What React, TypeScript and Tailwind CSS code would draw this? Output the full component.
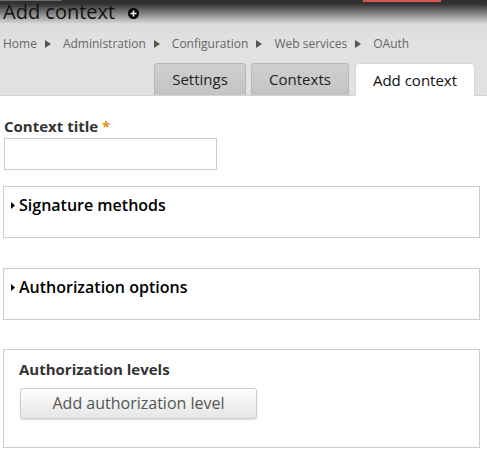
import React from "react";

const Arrow = () => (
  <svg width="6" height="8" viewBox="0 0 6 8" className="ml-[8px] mr-[12px] shrink-0">
    <path d="M0 0 L6 4 L0 8 Z" fill="#555" />
  </svg>
);

const Caret = () => (
  <svg width="4" height="7" viewBox="0 0 4 7" className="mr-[4px] shrink-0">
    <path d="M0 0 L4 3.5 L0 7 Z" fill="#000" />
  </svg>
);

export default function App() {
  const crumbs = ["Home", "Administration", "Configuration", "Web services", "OAuth"];
  return (
    <div className="w-[487px] h-[454px] bg-white overflow-hidden font-['Open_Sans',sans-serif]">
      <div className="relative h-[96px] bg-[linear-gradient(to_bottom,#2f2f2f_0px,#333_4px,#dcdcdc_24px,#e1e1e1_40px,#e1e1e1_100%)] border-b border-[#d4d4d4] flex flex-col">
        <div className="absolute left-0 top-0 w-[62px] h-[1px] bg-[#6a6a6a]" />
        <div className="absolute left-[363px] top-0 w-[78px] h-[2px] bg-[#d9534f]" />
        <div className="flex items-center h-[24px] pl-[3px]">
          <span className="text-[20px] leading-[24px] text-[#111]">Add context</span>
          <svg width="11" height="11" viewBox="0 0 11 11" className="ml-[13px] mt-[3px]">
            <circle cx="5.5" cy="5.5" r="5.5" fill="#000" />
            <path d="M5.5 2.5 V8.5 M2.5 5.5 H8.5" stroke="#fff" strokeWidth="1.6" />
          </svg>
        </div>
        <div className="flex items-center h-[16px] mt-[12px] pl-[3px] text-[12px] leading-[16px] text-[#666]">
          {crumbs.map((c, i) => (
            <React.Fragment key={c}>
              <span>{c}</span>
              {i < crumbs.length - 1 && <Arrow />}
            </React.Fragment>
          ))}
        </div>
        <div className="flex items-end pl-[154px] mt-auto">
          <div className="w-[92px] h-[32px] flex items-center justify-center rounded-t-[4px] border border-b-0 border-[#b5b5b5] bg-[linear-gradient(to_bottom,#cfcfcf,#c4c4c4)] text-[15px] text-[#222]">
            Settings
          </div>
          <div className="w-[98px] h-[32px] flex items-center justify-center rounded-t-[4px] border border-b-0 border-[#b5b5b5] bg-[linear-gradient(to_bottom,#cfcfcf,#c4c4c4)] text-[15px] text-[#222] ml-[5px]">
            Contexts
          </div>
          <div className="w-[120px] h-[33px] -mb-[1px] flex items-center justify-center rounded-t-[4px] border border-b-0 border-[#d6d6d6] bg-white text-[15px] text-[#111] ml-[6px]">
            Add context
          </div>
        </div>
      </div>

      <div className="pl-[3px] pr-[7px]">
        <div className="mt-[20px] pl-[1px] text-[15px] leading-[20px] font-bold text-[#333]">
          Context title <span className="text-[#e09010]">*</span>
        </div>
        <div className="mt-[2px] ml-[1px] w-[213px] h-[32px] border border-[#ccc] bg-white" />

        <div className="mt-[16px] h-[52px] border border-[#ccc] pt-[8px] pl-[7px]">
          <div className="flex items-center text-[16px] leading-[20px] font-semibold text-black">
            <Caret />
            Signature methods
          </div>
        </div>

        <div className="mt-[30px] h-[52px] border border-[#ccc] pt-[8px] pl-[7px]">
          <div className="flex items-center text-[16px] leading-[20px] font-semibold text-black">
            <Caret />
            Authorization options
          </div>
        </div>

        <div className="mt-[29px] h-[99px] border border-[#ccc] pt-[9px] pl-[15px]">
          <div className="text-[15px] leading-[20px] font-bold text-[#333]">Authorization levels</div>
          <button className="mt-[9px] ml-[1px] w-[237px] h-[31px] rounded-[3px] border border-[#ccc] bg-[linear-gradient(to_bottom,#fdfdfd,#e6e6e6)] shadow-[0_1px_2px_rgba(0,0,0,0.15)] text-[16px] leading-[29px] text-[#555]">
            Add authorization level
          </button>
        </div>
      </div>
    </div>
  );
}
